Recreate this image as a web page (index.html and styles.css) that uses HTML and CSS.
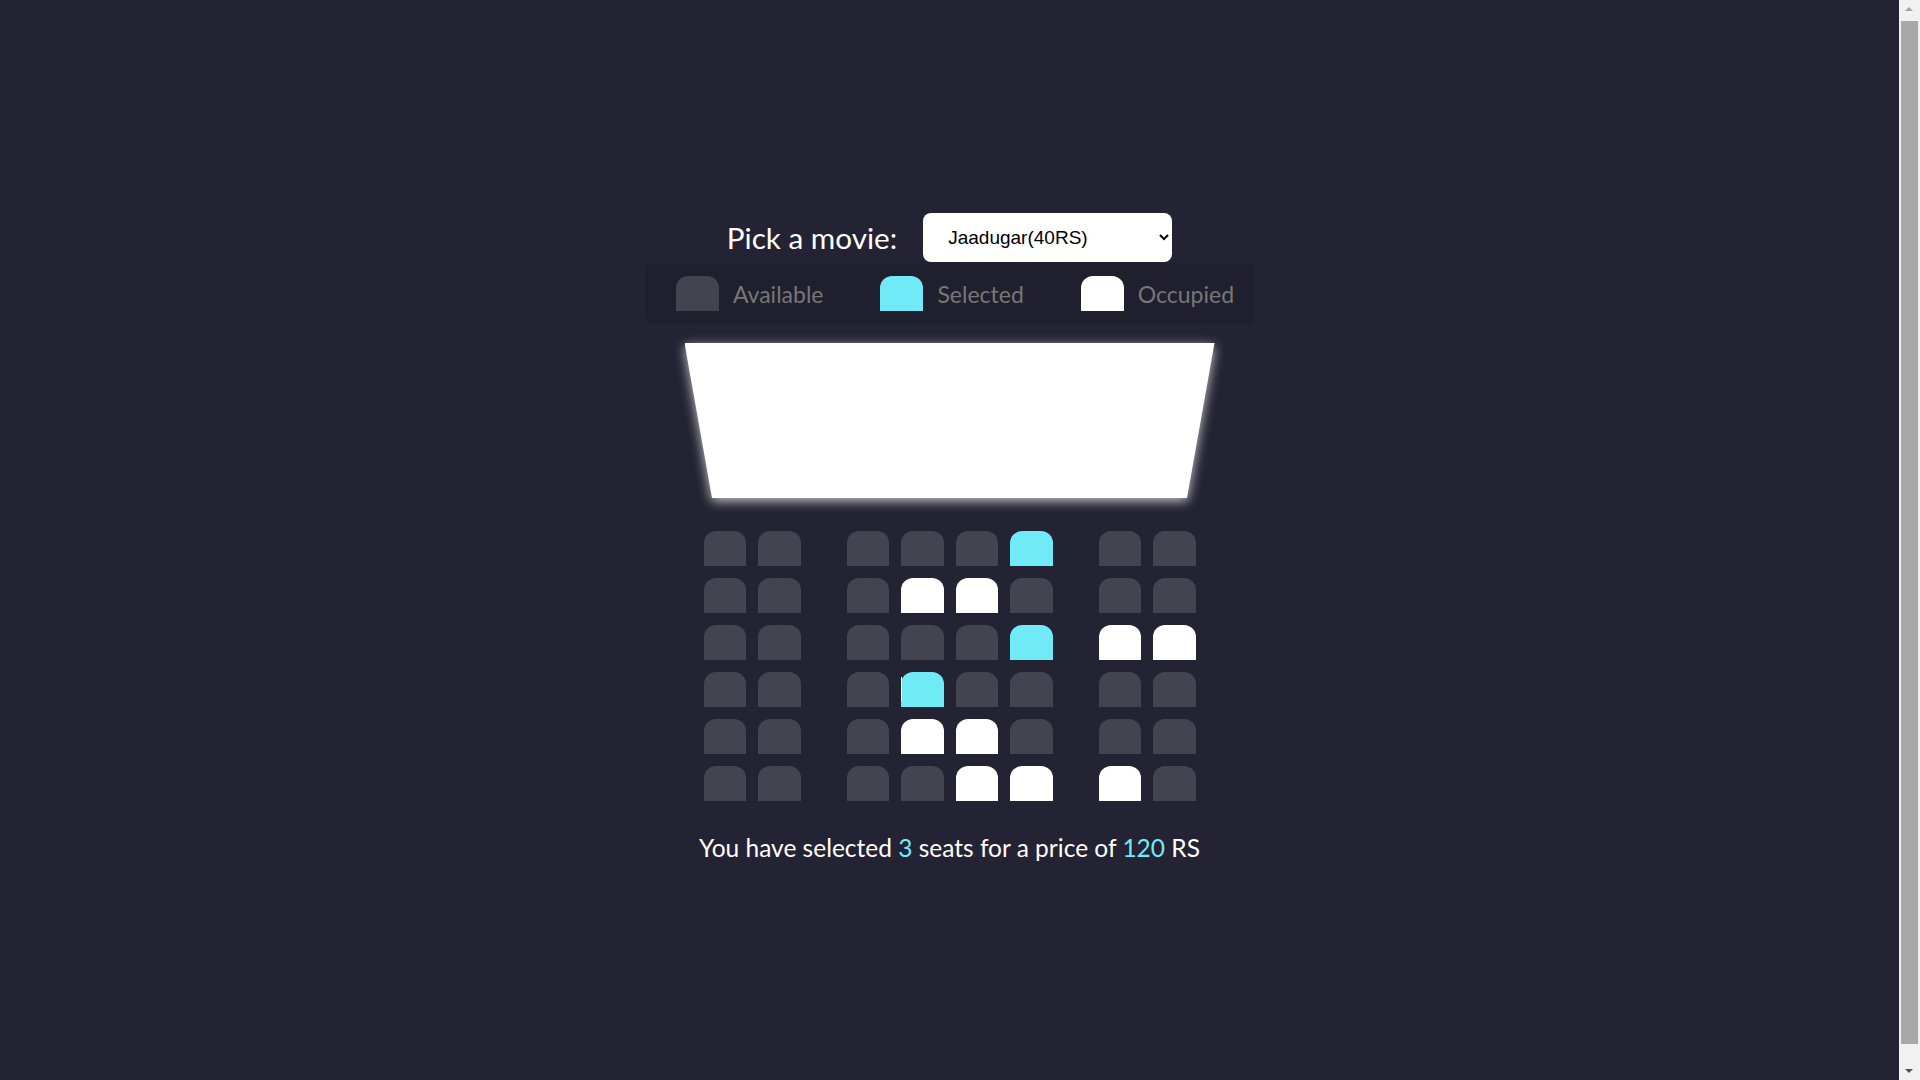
FILE: index.html
```html
<!DOCTYPE html>
<html lang="en">
<head>
<meta charset="UTF-8">
<title>Movie Seat Booking</title>
<link rel="stylesheet" href="styles.css">
</head>
<body>
  <div class="movie-container">
    <label class="movie-label" for="movie">Pick a movie:</label>
    <select id="movie" class="movie-select">
      <option value="40">Jaadugar(40RS)</option>
      <option value="50">Sholay(50RS)</option>
      <option value="60">Lagaan(60RS)</option>
    </select>
  </div>

  <ul class="showcase">
    <li class="legend-item"><div class="seat legend-seat"></div><small class="legend-text">Available</small></li>
    <li class="legend-item"><div class="seat legend-seat selected"></div><small class="legend-text">Selected</small></li>
    <li class="legend-item"><div class="seat legend-seat occupied"></div><small class="legend-text">Occupied</small></li>
  </ul>

  <div class="container">
    <div class="screen-wrap"><div class="screen"></div></div>

    <div class="row">
      <div class="seat"></div><div class="seat"></div><div class="seat"></div><div class="seat"></div>
      <div class="seat"></div><div class="seat selected"></div><div class="seat"></div><div class="seat"></div>
    </div>
    <div class="row">
      <div class="seat"></div><div class="seat"></div><div class="seat"></div><div class="seat occupied"></div>
      <div class="seat occupied"></div><div class="seat"></div><div class="seat"></div><div class="seat"></div>
    </div>
    <div class="row">
      <div class="seat"></div><div class="seat"></div><div class="seat"></div><div class="seat"></div>
      <div class="seat"></div><div class="seat selected"></div><div class="seat occupied"></div><div class="seat occupied"></div>
    </div>
    <div class="row">
      <div class="seat"></div><div class="seat"></div><div class="seat"></div><div class="seat selected"><span class="caret"></span></div>
      <div class="seat"></div><div class="seat"></div><div class="seat"></div><div class="seat"></div>
    </div>
    <div class="row">
      <div class="seat"></div><div class="seat"></div><div class="seat"></div><div class="seat occupied"></div>
      <div class="seat occupied"></div><div class="seat"></div><div class="seat"></div><div class="seat"></div>
    </div>
    <div class="row">
      <div class="seat"></div><div class="seat"></div><div class="seat"></div><div class="seat"></div>
      <div class="seat occupied"></div><div class="seat occupied"></div><div class="seat occupied"></div><div class="seat"></div>
    </div>
  </div>

  <p class="text">You have selected <span class="count">3</span> seats for a price of <span class="total">120</span> RS</p>

  <div class="scrollbar" aria-hidden="true">
    <div class="scroll-arrow scroll-up"></div>
    <div class="scroll-thumb"></div>
    <div class="scroll-arrow scroll-down"></div>
  </div>
</body>
</html>
```

FILE: styles.css
```css
* {
  box-sizing: border-box;
}

html {
  overflow: hidden;
}

body {
  margin: 8px 29px 8px 8px;
  height: 100vh;
  background-color: #242333;
  color: #fff;
  display: flex;
  flex-direction: column;
  align-items: center;
  justify-content: center;
  font-family: Lato, "Open Sans", sans-serif;
}

.movie-container {
  display: flex;
  align-items: center;
  gap: 26px;
  height: 49px;
}

.movie-label {
  font-size: 29.7px;
  line-height: 36px;
  color: #fff;
}

.movie-select {
  width: 249px;
  height: 49px;
  background-color: #fff;
  color: #000;
  border: 0;
  border-radius: 8px;
  font-family: "Liberation Sans", Arial, sans-serif;
  font-size: 19px;
  padding: 0 9px 0 21px;
}

.showcase {
  display: flex;
  gap: 57px;
  margin: 1px 0 0 0;
  padding: 13px 20px 13px 31px;
  list-style: none;
  background: rgba(0, 0, 0, 0.1);
  border-radius: 6px;
  color: #777;
}

.legend-item {
  display: flex;
  align-items: center;
}

.legend-text {
  font-size: 23px;
  line-height: 28px;
  margin-left: 14px;
}

.container {
  display: flex;
  flex-direction: column;
  align-items: center;
}

.screen-wrap {
  margin-top: 19px;
  margin-bottom: 27px;
  filter: drop-shadow(0 3px 6px rgba(255, 255, 255, 0.75));
}

.screen {
  width: 530px;
  height: 155px;
  background-color: #fff;
  clip-path: polygon(0 0, 100% 0, calc(100% - 27.5px) 100%, 27.5px 100%);
}

.row {
  display: flex;
}

.seat {
  position: relative;
  width: 42.5px;
  height: 35px;
  margin: 6px;
  background-color: #444451;
  border-top-left-radius: 12px;
  border-top-right-radius: 12px;
}

.row .seat:nth-of-type(2) {
  margin-right: 40px;
}

.row .seat:nth-last-of-type(2) {
  margin-left: 40px;
}

.legend-seat {
  width: 43px;
  margin: 0;
}

.seat.selected {
  background-color: #6feaf6;
}

.seat.occupied {
  background-color: #fff;
}

.caret {
  position: absolute;
  left: 0;
  top: 5px;
  width: 1px;
  height: 24px;
  background: #fff;
}

.text {
  font-size: 24.5px;
  line-height: 29px;
  margin: 26px 0 21px;
}

.text span {
  color: #6feaf6;
}

.scrollbar {
  position: fixed;
  top: 0;
  right: 0;
  width: 21px;
  height: 100vh;
  background: #f1f1f1;
}

.scroll-thumb {
  position: absolute;
  top: 21px;
  left: 2px;
  width: 17px;
  height: 1023px;
  background: #a8a8a8;
}

.scroll-arrow {
  position: absolute;
  left: 6px;
  width: 0;
  height: 0;
  border-left: 4.5px solid transparent;
  border-right: 4.5px solid transparent;
}

.scroll-up {
  top: 7px;
  border-bottom: 4.5px solid #a3a3a3;
}

.scroll-down {
  bottom: 7px;
  border-top: 4.5px solid #505050;
}
```
